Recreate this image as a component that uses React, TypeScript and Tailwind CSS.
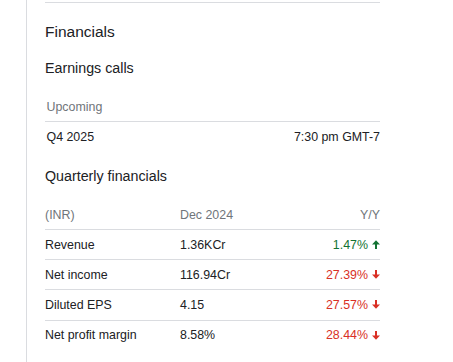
import React from 'react';

type Row = { label: string; value: string; change: string; up: boolean };

const rows: Row[] = [
  { label: 'Revenue', value: '1.36KCr', change: '1.47%', up: true },
  { label: 'Net income', value: '116.94Cr', change: '27.39%', up: false },
  { label: 'Diluted EPS', value: '4.15', change: '27.57%', up: false },
  { label: 'Net profit margin', value: '8.58%', change: '28.44%', up: false },
];

const Arrow: React.FC<{ up: boolean }> = ({ up }) => (
  <svg width="8" height="9" viewBox="0 0 8 9" className="ml-[4px] shrink-0" aria-hidden>
    {up ? (
      <g fill="currentColor">
        <polygon points="0,4.5 4,0.3 8,4.5" />
        <rect x="3" y="3.5" width="2" height="5.5" />
      </g>
    ) : (
      <g fill="currentColor">
        <polygon points="0,4.5 4,8.7 8,4.5" />
        <rect x="3" y="0" width="2" height="5.5" />
      </g>
    )}
  </svg>
);

const App: React.FC = () => {
  return (
    <div className="flex h-[362px] w-[453px] bg-white font-['Liberation_Sans',Arial,sans-serif] text-[#202124]">
      <div className="ml-[26px] h-full border-l border-[#dadce0] pl-[18px]">
        <div className="mt-[2px] w-[335px] border-t border-[#dadce0] pt-[19px]">
          <div className="text-[15.5px] leading-[20px]">Financials</div>
          <div className="mt-[16px] text-[14.25px] leading-[20px]">Earnings calls</div>

          <div className="mt-[21px] border-b border-[#dadce0] pb-[6px] pl-[1.5px] text-[12.4px] leading-[16px] text-[#70757a]">
            Upcoming
          </div>
          <div className="flex justify-between pl-[1.5px] pt-[6.5px] text-[12.4px] leading-[16px]">
            <span>Q4 2025</span>
            <span>7:30 pm GMT-7</span>
          </div>

          <div className="mt-[21.5px] text-[14.25px] leading-[20px]">Quarterly financials</div>

          <div className="mt-[21px] text-[12.4px] leading-[16px]">
            <div className="grid grid-cols-[135px_1fr_auto] border-b border-[#dadce0] pb-[6px] text-[#70757a]">
              <span>(INR)</span>
              <span>Dec 2024</span>
              <span className="text-right">Y/Y</span>
            </div>
            {rows.map((row, i) => (
              <div
                key={row.label}
                className={
                  'grid grid-cols-[135px_1fr_auto] py-[6.6px] ' +
                  (i < rows.length - 1 ? 'border-b border-[#dadce0]' : '')
                }
              >
                <span>{row.label}</span>
                <span>{row.value}</span>
                <span
                  className={
                    'flex items-center justify-end ' + (row.up ? 'text-[#137333]' : 'text-[#d93025]')
                  }
                >
                  {row.change}
                  <Arrow up={row.up} />
                </span>
              </div>
            ))}
          </div>
        </div>
      </div>
    </div>
  );
};

export default App;
